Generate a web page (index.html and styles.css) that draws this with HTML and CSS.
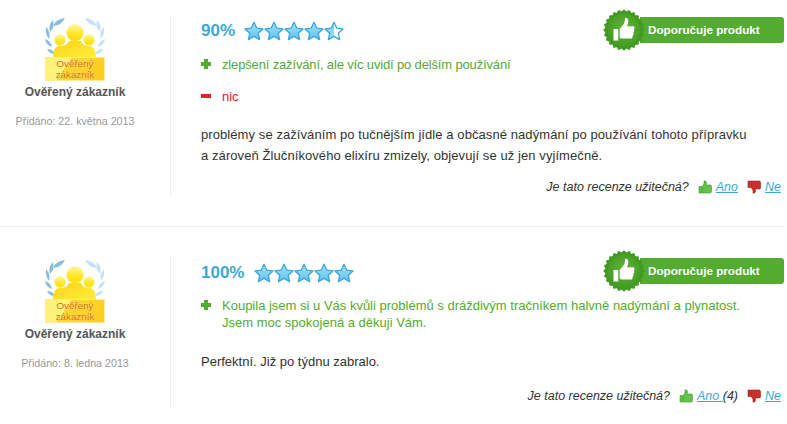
FILE: index.html
```html
<!DOCTYPE html>
<html lang="cs">
<head>
    <meta charset="UTF-8">
    <meta name="viewport" content="width=device-width, initial-scale=1.0">
    <title>Recenze produktu</title>
    <link rel="stylesheet" href="styles.css">
</head>
<body>
    <svg class="defs" width="0" height="0">
        <defs>
            <linearGradient id="star-fill" x1="0" y1="0" x2="0" y2="1">
                <stop offset="0" stop-color="#a9e2f8"/>
                <stop offset="1" stop-color="#5cc2ee"/>
            </linearGradient>
            <linearGradient id="star-half" x1="0" y1="0" x2="1" y2="0">
                <stop offset="0.5" stop-color="#8ed7f5"/>
                <stop offset="0.5" stop-color="#ffffff"/>
            </linearGradient>
            <radialGradient id="seal-fill" cx="0.5" cy="0.45" r="0.6">
                <stop offset="0" stop-color="#5fb536"/>
                <stop offset="1" stop-color="#439a23"/>
            </radialGradient>
            <linearGradient id="head-fill" x1="0" y1="0" x2="0" y2="1">
                <stop offset="0" stop-color="#fff6a0"/>
                <stop offset="0.5" stop-color="#ffe82e"/>
                <stop offset="1" stop-color="#ffdc00"/>
            </linearGradient>
            <linearGradient id="body-fill" x1="0" y1="0" x2="1" y2="1">
                <stop offset="0" stop-color="#fdd21a"/>
                <stop offset="1" stop-color="#ffee3a"/>
            </linearGradient>
            <g id="branch">
                <path d="M8 9Q11 2 20 1Q17 8 8 9z"/>
                <path d="M5 15Q3 8 8 3Q10 10 5 15z"/>
                <path d="M4 22Q0 17 1 10Q6 15 4 22z"/>
                <path d="M7 30Q1 28 0 22Q6 24 7 30z"/>
                <path d="M10 37Q4 37 2 32Q8 32 10 37z"/>
            </g>
            <symbol id="laurel" viewBox="0 0 60 40">
                <use href="#branch" fill="#86bfdd"/>
                <use href="#branch" fill="#c4e2f2" transform="translate(60) scale(-1 1)"/>
                <g fill="url(#head-fill)" stroke="#fdf0a0" stroke-width="0.5">
                    <circle cx="15" cy="23" r="5.5"/>
                    <circle cx="44" cy="23" r="5.500"/>
                    <circle cx="30" cy="16" r="8.500"/>
                </g>
                <path fill="url(#body-fill)" d="M8 40c0-6 2-11 7-11 4 0 7-1 9-5h12c2 4 5 5 8 5 5 0 7 5 7 11z"/>
            </symbol>
            <symbol id="star" viewBox="0 0 20 20">
                <path d="M10 1.200l2.700 5.900 6.300.8-4.700 4.300 1.300 6.400L10 15.400l-5.600 3.200 1.300-6.400L1 7.900l6.300-.8z" stroke="#3aa7dc" stroke-width="1.300" stroke-linejoin="round"/>
            </symbol>
            <symbol id="seal" viewBox="0 0 44 44">
                <g fill="#439a23">
                    <rect x="6.500" y="6.500" width="31" height="31" rx="1"/>
                    <rect x="6.500" y="6.500" width="31" height="31" rx="1" transform="rotate(15 22 22)"/>
                    <rect x="6.500" y="6.500" width="31" height="31" rx="1" transform="rotate(30 22 22)"/>
                    <rect x="6.500" y="6.500" width="31" height="31" rx="1" transform="rotate(45 22 22)"/>
                    <rect x="6.500" y="6.500" width="31" height="31" rx="1" transform="rotate(60 22 22)"/>
                    <rect x="6.500" y="6.500" width="31" height="31" rx="1" transform="rotate(75 22 22)"/>
                </g>
                <circle cx="22" cy="22" r="17" fill="url(#seal-fill)"/>
                <path fill="#fff" d="M11 21h5v12h-5zM17.500 21l4-5c1-1.500 1.500-3 1.500-6 0-1.500 3.500-1 3.500 2.500 0 2-.5 4-1.500 5.500h6.500c2 0 2 3 .5 3.500 1.200 1 1 3-.5 3.500 1 1 .7 2.800-.7 3.200.7 1.300 0 2.800-1.800 2.800h-8c-1.500 0-2.500-.5-3.500-1z"/>
            </symbol>
            <symbol id="thumb" viewBox="0 0 14 14">
                <path d="M1 6.500h2.500v6.500H1zM4 6.500l2-2.500V1c1.500-.5 2.500.5 2.500 2 0 .8-.2 1.500-.5 2h4.500c.8 0 1 .7 1 1.500v5c0 .8-.5 1.500-1.300 1.500H4z"/>
            </symbol>
        </defs>
    </svg>

    <div class="review">
        <div class="author">
            <div class="avatar">
                <svg class="avatar-pic"><use href="#laurel"/></svg>
                <div class="avatar-label">Ověřený<br>zákazník</div>
            </div>
            <div class="name">Ověřený zákazník</div>
            <div class="date">Přidáno: 22. května 2013</div>
        </div>
        <div class="content">
            <div class="badge">
                <svg class="seal"><use href="#seal"/></svg>
                <span class="badge-text">Doporučuje produkt</span>
            </div>
            <div class="rating">
                <span class="percent">90%</span>
                <span class="stars">
                    <svg class="star"><use href="#star"/></svg>
                    <svg class="star"><use href="#star"/></svg>
                    <svg class="star"><use href="#star"/></svg>
                    <svg class="star"><use href="#star"/></svg>
                    <svg class="star half"><use href="#star"/></svg>
                </span>
            </div>
            <div class="pro"><span class="plus"></span><p>zlepšení zažívání, ale víc uvidí po delším používání</p></div>
            <div class="con"><span class="minus"></span><p>nic</p></div>
            <p class="text">problémy se zažíváním po tučnějším jídle a občasné nadýmání po používání tohoto přípravku<br>a zároveň Žlučníkového elixíru zmizely, objevují se už jen vyjímečně.</p>
            <div class="useful">
                <em>Je tato recenze užitečná?</em>
                <svg class="thumb up"><use href="#thumb"/></svg>
                <a href="#">Ano</a>
                <svg class="thumb down"><use href="#thumb"/></svg>
                <a href="#">Ne</a>
            </div>
        </div>
    </div>

    <div class="review second">
        <div class="author">
            <div class="avatar">
                <svg class="avatar-pic"><use href="#laurel"/></svg>
                <div class="avatar-label">Ověřený<br>zákazník</div>
            </div>
            <div class="name">Ověřený zákazník</div>
            <div class="date">Přidáno: 8. ledna 2013</div>
        </div>
        <div class="content">
            <div class="badge">
                <svg class="seal"><use href="#seal"/></svg>
                <span class="badge-text">Doporučuje produkt</span>
            </div>
            <div class="rating">
                <span class="percent">100%</span>
                <span class="stars">
                    <svg class="star"><use href="#star"/></svg>
                    <svg class="star"><use href="#star"/></svg>
                    <svg class="star"><use href="#star"/></svg>
                    <svg class="star"><use href="#star"/></svg>
                    <svg class="star"><use href="#star"/></svg>
                </span>
            </div>
            <div class="pro"><span class="plus"></span><p>Koupila jsem si u Vás kvůli problémů s dráždivým tračníkem halvně nadýmání a plynatost.<br>Jsem moc spokojená a děkuji Vám.</p></div>
            <p class="text">Perfektní. Již po týdnu zabralo.</p>
            <div class="useful">
                <em>Je tato recenze užitečná?</em>
                <svg class="thumb up"><use href="#thumb"/></svg>
                <span><a href="#">Ano </a><em>(4)</em></span>
                <svg class="thumb down"><use href="#thumb"/></svg>
                <a href="#">Ne</a>
            </div>
        </div>
    </div>
</body>
</html>
```

FILE: styles.css
```css
body {
    margin: 0;
    font-family: "Liberation Sans", Arial, sans-serif;
    font-size: 13px;
    color: #333;
    background: white;
    overflow: hidden;
}

.defs {
    display: block;
    height: 0;
}

p {
    margin: 0;
}

.review {
    display: flex;
    width: 784px;
    height: 227px;
    padding-top: 16px;
    box-sizing: border-box;
    border-bottom: 1px solid #eee;
}

.review.second {
    height: 197px;
    padding-top: 29px;
    border-bottom: none;
}

.author {
    width: 150px;
    padding-right: 20px;
    height: 180px;
    text-align: center;
    border-right: 1px solid #eee;
    flex-shrink: 0;
}

.second .author {
    height: 152px;
}

.avatar {
    position: relative;
    width: 60px;
    height: 65px;
    margin: 1px 0 0 45px;
}

.second .avatar {
    margin: 3px 0 0 45px;
}

.avatar-pic {
    display: block;
    width: 60px;
    height: 40px;
}

.avatar-label {
    position: absolute;
    left: 0;
    top: 40px;
    width: 58px;
    height: 22px;
    border: 1px solid #fde99a;
    background: linear-gradient(125deg, #fff27a 35%, #fdd83a 35%, #fdcb1a);
    color: #e06a00;
    font-size: 9.800px;
    line-height: 11px;
    text-shadow: 0 0 1px #fff6c0;
    text-align: center;
}

.name {
    margin-top: 2px;
    font-size: 12px;
    font-weight: bold;
    color: #555;
    line-height: 16px;
}

.date {
    margin-top: 14px;
    font-size: 10.700px;
    color: #999;
    line-height: 14px;
}

.content {
    position: relative;
    flex: 1;
    padding-left: 30px;
}

.badge {
    position: absolute;
    top: -7px;
    right: 0;
    width: 181px;
    height: 42px;
    display: flex;
    align-items: center;
}

.second .badge {
    top: -6px;
}

.seal {
    position: absolute;
    left: 0;
    top: 0;
    width: 42px;
    height: 42px;
}

.badge-text {
    margin-left: 37px;
    flex: 1;
    height: 26px;
    padding-left: 8px;
    background: #53ab2f;
    border-radius: 0 3px 3px 0;
    color: white;
    font-size: 11.700px;
    font-weight: bold;
    line-height: 25px;
}

.rating {
    display: flex;
    align-items: center;
    height: 30px;
}

.second .rating {
    margin-top: 2px;
}

.percent {
    font-size: 17px;
    font-weight: bold;
    color: #3ba9d6;
    margin-right: 9px;
}

.second .percent {
    margin-right: 10px;
}

.stars {
    display: flex;
}

.star {
    width: 20px;
    height: 20px;
    fill: url(#star-fill);
}

.star.half {
    fill: url(#star-half);
}

.pro, .con {
    display: flex;
    margin-top: 10px;
    line-height: 17px;
}

.pro {
    color: #53ab2f;
    letter-spacing: -0.150px;
}

.con {
    margin-top: 15px;
    color: #e0212f;
}

.second .pro {
    margin-top: 9px;
    letter-spacing: 0;
}

.plus, .minus {
    width: 10px;
    height: 10px;
    margin: 3px 11px 0 0;
    flex-shrink: 0;
}

.plus {
    background:
        linear-gradient(#53ab2f, #53ab2f) center / 10px 4px no-repeat,
        linear-gradient(#53ab2f, #53ab2f) center / 4px 10px no-repeat;
}

.minus {
    background: linear-gradient(#e0212f, #e0212f) center / 10px 4px no-repeat;
}

.text {
    margin-top: 19px;
    line-height: 21px;
    letter-spacing: 0.080px;
}

.second .text {
    margin-top: 20px;
    letter-spacing: 0;
}

.useful {
    position: absolute;
    right: 3px;
    top: 163px;
    display: flex;
    align-items: center;
    font-size: 12.500px;
    line-height: 16px;
}

.second .useful {
    top: 132px;
}

.useful a {
    color: #3ba9d6;
    font-style: italic;
    text-decoration: underline;
}

.thumb {
    width: 14px;
    height: 14px;
    margin: 0 4px 0 9px;
}

.thumb.up {
    fill: #62c24a;
    stroke: #3f9c2b;
    stroke-width: 0.600;
}

.thumb.down {
    fill: #c9302c;
    stroke: #9c1f1c;
    stroke-width: 0.600;
    transform: scaleY(-1);
}
```
